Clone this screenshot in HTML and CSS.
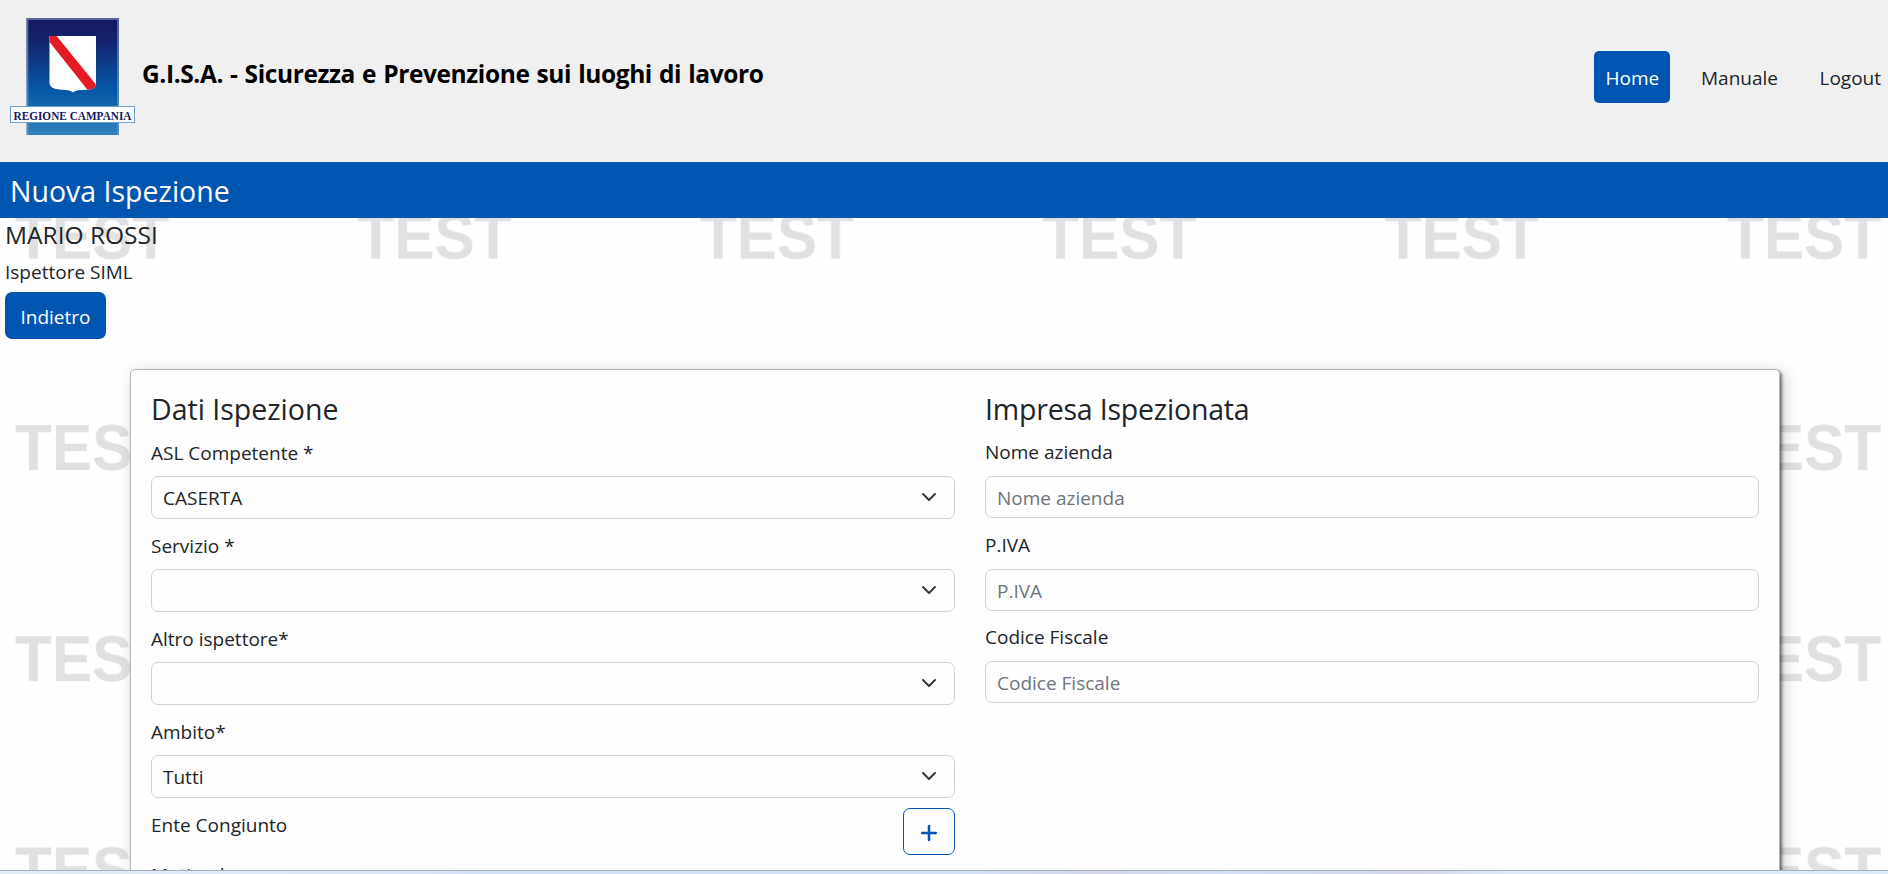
FILE: index.html
```html
<!DOCTYPE html>
<html lang="it">
<head>
<meta charset="utf-8">
<title>G.I.S.A. - Nuova Ispezione</title>
<link rel="stylesheet" href="styles.css">
</head>
<body>
<svg class="watermark" width="1888" height="874" aria-hidden="true">
  <defs>
    <pattern id="test-tile" width="342.4" height="211.2" patternUnits="userSpaceOnUse" patternTransform="translate(0 192)">
      <text x="15" y="66.500" class="watermark-text" textLength="154" lengthAdjust="spacingAndGlyphs">TEST</text>
    </pattern>
  </defs>
  <rect width="1888" height="874" fill="url(#test-tile)"/>
</svg>
<div class="page">
  <header class="header">
    <svg class="logo" width="127" height="119" viewBox="0 0 127 119" role="img" aria-label="Regione Campania">
      <defs>
        <linearGradient id="logo-bg" x1="0" y1="0" x2="0" y2="1">
          <stop offset="0" stop-color="#15175f"/>
          <stop offset=".2" stop-color="#14246f"/>
          <stop offset=".6" stop-color="#0657a4"/>
          <stop offset="1" stop-color="#3182bd"/>
        </linearGradient>
        <clipPath id="shield"><path d="M40.500 19H87V66Q87 71.500 81 72.500L69 73.200Q66 73.500 64 75.500Q62 73.500 59 73.200L50 72.500Q40.500 71.500 40.500 66Z"/></clipPath>
      </defs>
      <rect x="17.500" y="1" width="92.500" height="117" fill="url(#logo-bg)"/>
      <path d="M18.500 118V2H109V118" fill="none" stroke="#7e9dc6" stroke-opacity=".6" stroke-width="1.800"/>
      <g clip-path="url(#shield)">
        <rect x="40" y="18" width="48" height="60" fill="#fff"/>
        <path d="M39 17H46L89 70L81 76L39 23Z" fill="#e51b23"/>
      </g>
      <rect x="1.500" y="89.500" width="124" height="16" fill="#fff" stroke="#6f9fcb"/>
      <text x="4.500" y="103" class="logo-text" textLength="118" lengthAdjust="spacingAndGlyphs">REGIONE CAMPANIA</text>
    </svg>
    <h1 class="app-title">G.I.S.A. - Sicurezza e Prevenzione sui luoghi di lavoro</h1>
    <nav class="nav">
      <a class="nav-link active">Home</a>
      <a class="nav-link">Manuale</a>
      <a class="nav-link">Logout</a>
    </nav>
  </header>
  <div class="page-bar">Nuova Ispezione</div>
  <section class="user">
    <div class="user-name">MARIO ROSSI</div>
    <div class="user-role">Ispettore SIML</div>
    <button class="btn-back">Indietro</button>
  </section>
  <main class="card">
    <section class="col-left">
      <h2 class="section-title">Dati Ispezione</h2>
      <label class="label">ASL Competente *</label>
      <div class="control select">CASERTA<svg class="chevron" viewBox="0 0 16 16"><path d="m2 5 6 6 6-6"/></svg></div>
      <label class="label">Servizio *</label>
      <div class="control select"><svg class="chevron" viewBox="0 0 16 16"><path d="m2 5 6 6 6-6"/></svg></div>
      <label class="label">Altro ispettore*</label>
      <div class="control select"><svg class="chevron" viewBox="0 0 16 16"><path d="m2 5 6 6 6-6"/></svg></div>
      <label class="label">Ambito*</label>
      <div class="control select">Tutti<svg class="chevron" viewBox="0 0 16 16"><path d="m2 5 6 6 6-6"/></svg></div>
      <div class="ente-row">
        <label class="label">Ente Congiunto</label>
        <button class="btn-add" aria-label="Aggiungi"><svg width="16" height="16" viewBox="0 0 16 16"><path d="M8 1V15M1 8H15"/></svg></button>
      </div>
      <label class="label">Motivo *</label>
    </section>
    <section class="col-right">
      <h2 class="section-title impresa">Impresa Ispezionata</h2>
      <label class="label">Nome azienda</label>
      <input class="control" placeholder="Nome azienda">
      <label class="label">P.IVA</label>
      <input class="control" placeholder="P.IVA">
      <label class="label">Codice Fiscale</label>
      <input class="control" placeholder="Codice Fiscale">
    </section>
  </main>
</div>
<div class="bottom-strip"></div>
</body>
</html>
```

FILE: styles.css
```css
* { box-sizing: border-box; }

body {
  margin: 0;
  height: 874px;
  overflow: hidden;
  background: #fefefe;
  color: #212529;
  font: 19px/28.500px "Open Sans", "Noto Sans", sans-serif;
}

.watermark { position: absolute; left: 0; top: 0; z-index: -1; }
.watermark-text { font: bold 64px "Liberation Sans", Arial, sans-serif; fill: #e1e1e1; }

.page { height: 870px; overflow: hidden; }

.header {
  display: flex;
  align-items: flex-start;
  height: 162px;
  padding: 17px 0 0 9px;
  background: #f0f0f0;
}
.logo { flex: none; overflow: visible; }
.logo-text { font: bold 13px "Liberation Serif", serif; fill: #17175c; }
.app-title {
  margin: 39px 0 0 6px;
  font-size: 24.500px;
  line-height: 36px;
  font-weight: 700;
  letter-spacing: -.4px;
  word-spacing: 1.100px;
  color: #000;
  white-space: nowrap;
}
.nav { display: flex; gap: 19.500px; margin: 34px -4px 0 auto; }
.nav-link { height: 52px; padding: 13px 11px 0; border-radius: 5px; line-height: 28px; }
.nav-link.active { width: 76px; background: #0055b0; color: #fff; }

.page-bar {
  height: 56px;
  padding: 8px 10px 0;
  background: #0055b0;
  color: #fff;
  font-size: 28.500px;
  line-height: 42px;
}

.user { height: 151px; padding: 0 5px; }
.user-name { height: 41px; padding-top: 1px; font-size: 24.500px; line-height: 32px; }
.user-role { height: 33px; line-height: 26px; }
.btn-back {
  display: block;
  width: 101px;
  height: 47px;
  padding: 3px 0 0;
  border: 0;
  border-radius: 7px;
  background: #0055b0;
  color: #fff;
  font: inherit;
}

.card {
  display: grid;
  grid-template-columns: 804px 774px;
  column-gap: 30px;
  width: 1650px;
  height: 620px;
  margin-left: 130px;
  padding: 21px 20px 0;
  border: 1px solid #b4b5b7;
  border-radius: 5px;
  background: #fefefe;
  box-shadow: 2px 2px 3px rgba(0, 0, 0, .5), 4px 4px 16px rgba(0, 0, 0, .2);
}
.section-title {
  margin: 0 0 11px;
  font-size: 28.500px;
  line-height: 36px;
  font-weight: 400;
}
.impresa { letter-spacing: -.2px; }
.label { display: block; height: 38px; line-height: 29px; }
.col-left .label { line-height: 31px; }
.control {
  display: block;
  width: 100%;
  height: 42px;
  margin: 0 0 12.500px;
  padding: 2px 11px 0;
  border: 1px solid #ced4da;
  border-radius: 7px;
  background: #fefefe;
  color: #212529;
  font: inherit;
  line-height: 42px;
  outline: 0;
}
.control::placeholder { color: #6c757d; opacity: 1; }
.select {
  display: flex;
  align-items: center;
  justify-content: space-between;
  height: 43px;
  margin-bottom: 12px;
  padding: 1px 17px 0 11px;
}
.chevron {
  width: 16px;
  height: 16px;
  margin: -2px 0 0 auto;
  fill: none;
  stroke: #343a40;
  stroke-width: 2;
  stroke-linecap: round;
  stroke-linejoin: round;
}
.ente-row { display: flex; justify-content: space-between; height: 50px; }
.btn-add {
  width: 52px;
  height: 47px;
  margin-top: -2px;
  padding: 5px 0 0;
  border: 1px solid #0055b0;
  border-radius: 7px;
  background: #fefefe;
}
.btn-add path { stroke: #0055b0; stroke-width: 2.500; stroke-linecap: round; }

.bottom-strip {
  height: 4px;
  border-top: 1px solid #a9b1bf;
  background: linear-gradient(90deg, #e0ecf6, #dfe8f6 18%, #d3dff5 25%, #d3dff5 52%, #d3d5e8 58%, #d3dff5 65%, #d3d5e8 75%, #deebf6 80%, #dcebf8);
}
```
